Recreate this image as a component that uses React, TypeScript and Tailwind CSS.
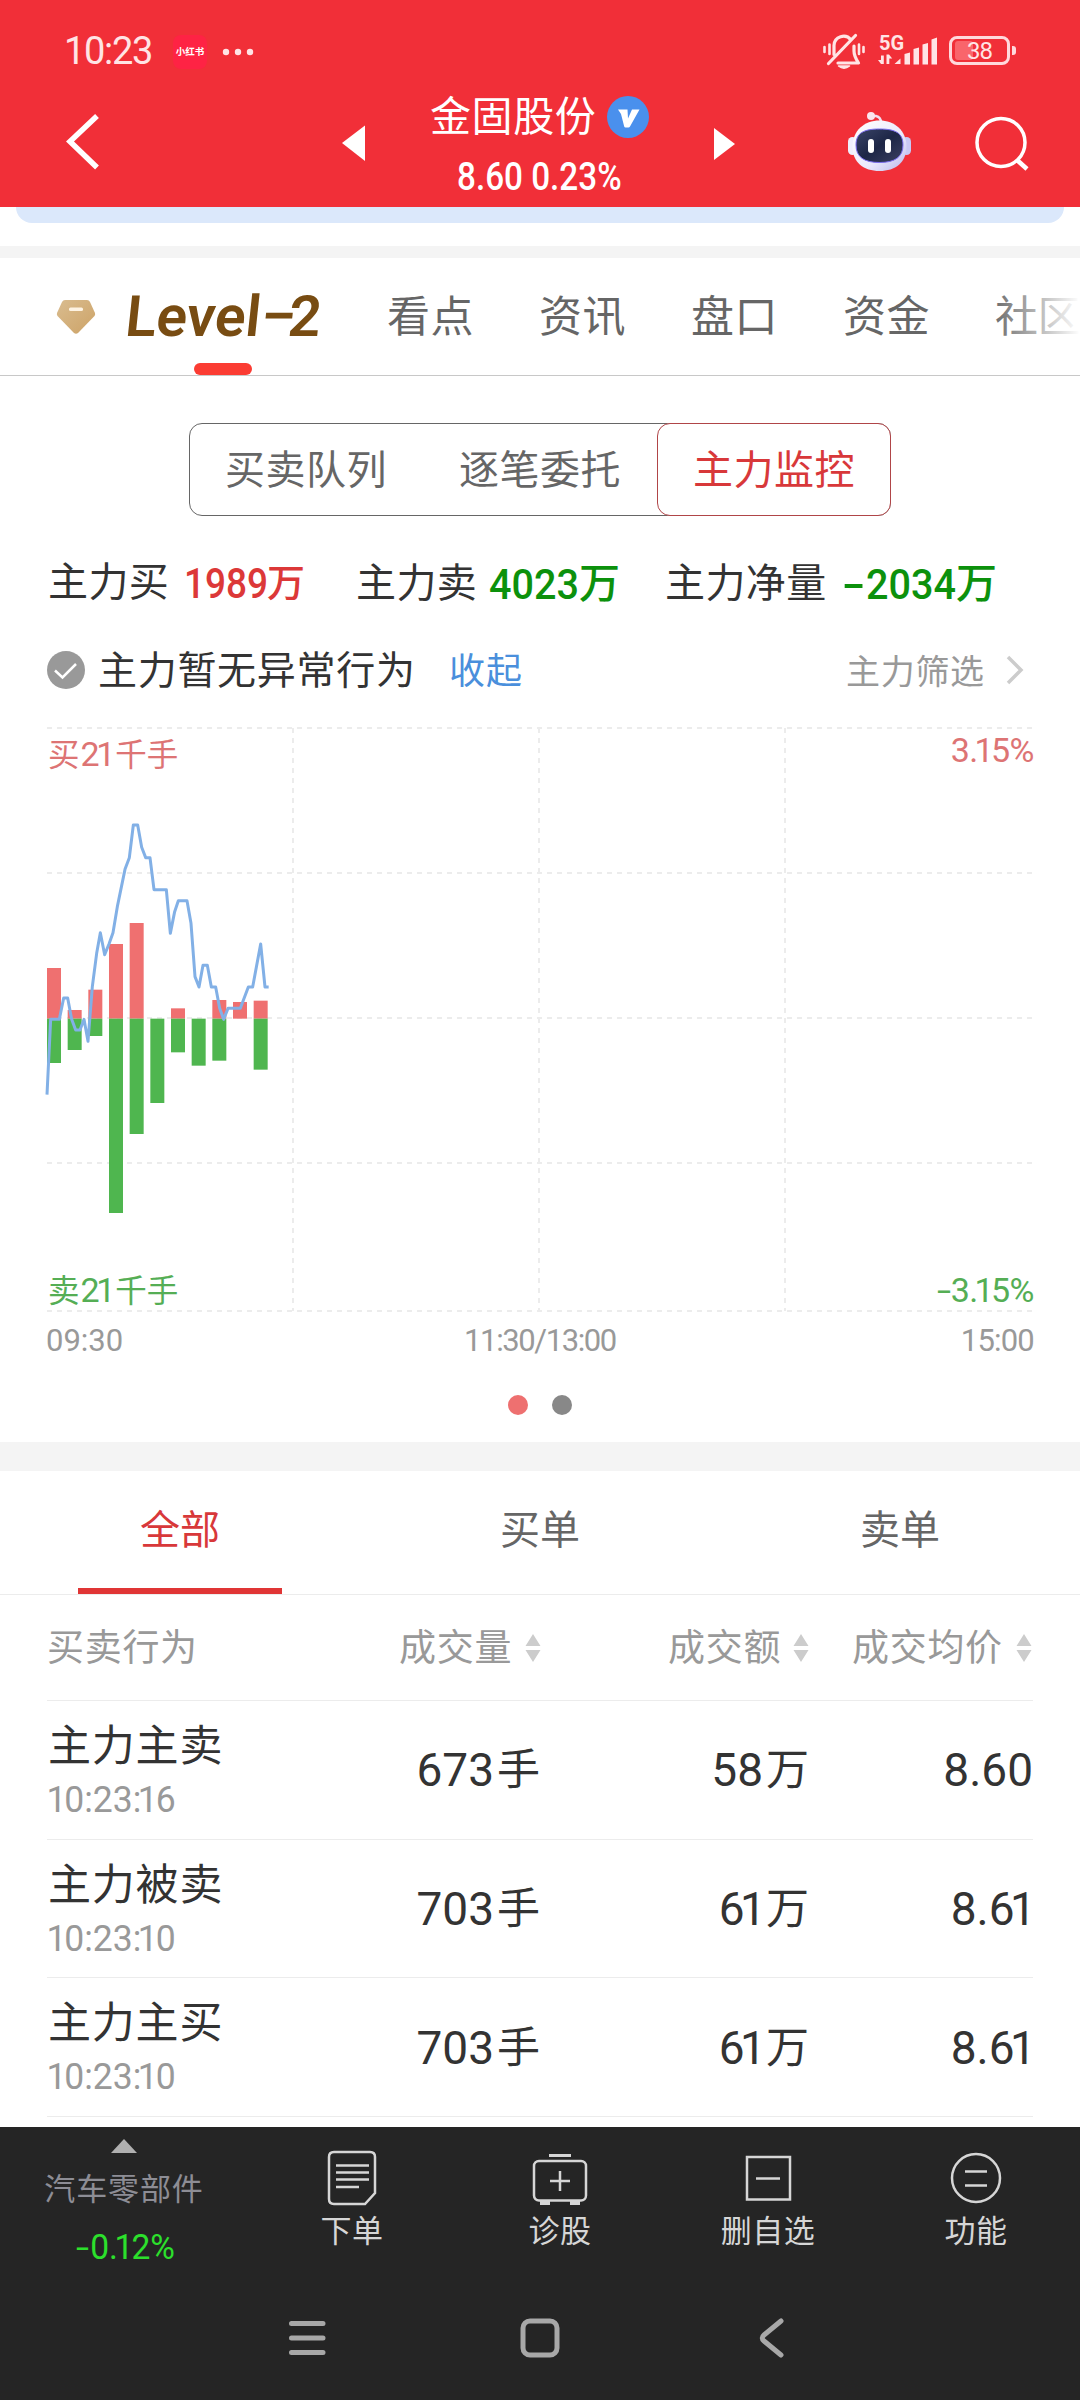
import React from "react";

type Row = { name: string; time: string; vol: string; amt: string; price: string };

const rows: Row[] = [
  { name: "主力主卖", time: "10:23:16", vol: "673", amt: "58", price: "8.60" },
  { name: "主力被卖", time: "10:23:10", vol: "703", amt: "61", price: "8.61" },
  { name: "主力主买", time: "10:23:10", vol: "703", amt: "61", price: "8.61" },
];

// Chart geometry in a 3x grid, zero axis at y = 716.
const buys = [[51, 564], [113, 690], [175, 629], [237, 492], [299, 429], [423, 685], [547, 660], [609, 666], [671, 662]];
const sells = [[51, 849], [113, 810], [175, 768], [237, 1299], [299, 1062], [361, 969], [423, 817], [485, 857], [547, 842], [671, 869]];
const line =
  "51,944 62,718 88,718 101,654 113,654 125,718 137,750 150,750 162,718 174,784 187,620 200,520 211,458 224,524 237,492 249,458 262,380 285,268 298,233 310,135 323,135 335,202 347,233 360,233 372,329 409,329 421,460 434,395 445,362 471,362 483,430 495,590 507,621 519,556 532,556 544,621 557,621 569,685 581,718 594,685 631,685 655,621 668,621 692,492 705,621 716,621";

// Sets each "1" tighter than the font's tabular figures do.
function Figures({ text }: { text: string }) {
  return (
    <>
      {text.split("").map((c, i) => (c === "1" ? <span key={i} className="mr-[-0.06em] ml-[-0.1em]">1</span> : c))}
    </>
  );
}

function StatusBar() {
  return (
    <div className="flex h-[101px] items-center text-[#ffe4e5]">
      <span className="ml-[64px] w-[109px] text-[38px] leading-[38px] tracking-[-1.3px]">10:23</span>
      <span className="mt-[2px] flex h-[34px] w-[34px] items-center justify-center rounded-[8px] bg-[#fe2344] text-[9.5px] leading-none font-bold whitespace-nowrap text-white">
        小红书
      </span>
      <svg className="mt-[2px] ml-[14px]" width="34" height="10" viewBox="0 0 34 10" fill="currentColor">
        <circle cx="5" cy="5" r="3.2" />
        <circle cx="17" cy="5" r="3.2" />
        <circle cx="29" cy="5" r="3.2" />
      </svg>
      <svg className="ml-auto" width="44" height="40" viewBox="822 31 44 40" fill="none" stroke="currentColor" strokeWidth="3.200" strokeLinecap="round" strokeLinejoin="round">
        <path d="M834 54.500V45.500a9.500 9.500 0 0 1 17-5.500M855.500 35.500L828.500 63.500M854 46v5c0 5 2 8 4.500 12H838" />
        <path d="M838.500 66q5.500 4.500 11 0z" fill="currentColor" strokeWidth="1.500" />
        <path d="M824.500 47v5M829.500 44.500v9.500M859 44.500v9.500M863.500 47v5" strokeWidth="2.600" />
      </svg>
      <div className="relative ml-[12px] h-[34px] w-[62px]">
        <span className="absolute top-[-1px] left-[1px] text-[20px] leading-[20px] font-bold">5G</span>
        <svg className="absolute top-0 left-0" width="62" height="34" viewBox="878 34 62 34" fill="currentColor">
          <path d="M894.500 64l6-5.500V64zM904.500 54l5.500-1.500V64.500h-5.500zM913.500 49l5.500-1.500V64.500h-5.500zM922.500 44.500l5.500-1.500V64.500h-5.500zM931.500 39.500l5.500-2V64.500h-5.500z" />
          <path d="M881 55.500h2.800V64h-2.800l-3-4h3zM886.500 64v-9.500h2.500l3.200 4h-2.900V64z" />
        </svg>
      </div>
      <div className="relative mr-[70px] ml-[9px] flex h-[29px] w-[61px] items-center justify-center rounded-[8px] border-3 border-[#ffd9dc]">
        <span className="absolute top-[2px] left-[3px] h-[19px] w-[18px] rounded-[3px] bg-[#f9656b]" />
        <span className="relative text-[24px] leading-[24px] tracking-[-1px]">38</span>
        <span className="absolute top-[7px] right-[-9px] h-[9px] w-[4px] rounded-r-[3px] bg-[#ffd9dc]" />
      </div>
    </div>
  );
}

function Robot() {
  return (
    <svg width="64" height="62" viewBox="848 111 64 62">
      <defs>
        <linearGradient id="shell" x1="0" y1="0" x2="1" y2="1">
          <stop offset="0" stopColor="#ffffff" />
          <stop offset="0.600" stopColor="#ebe9fb" />
          <stop offset="1" stopColor="#b9b8ee" />
        </linearGradient>
        <linearGradient id="face" x1="0" y1="0" x2="1" y2="1">
          <stop offset="0" stopColor="#3a4468" />
          <stop offset="0.500" stopColor="#1d2646" />
          <stop offset="1" stopColor="#3b4062" />
        </linearGradient>
      </defs>
      <path d="M871 116h5q5 1 5 7" fill="none" stroke="#f2dff0" strokeWidth="2.500" />
      <circle cx="871" cy="116" r="4" fill="#fbe6ee" />
      <rect x="848" y="137" width="9" height="18" rx="4.500" fill="#efeefc" />
      <rect x="902" y="137" width="9" height="18" rx="4.500" fill="#c9c8f4" />
      <path d="M879.500 120.500c15 0 27 10 27 26s-11 24.500-27 24.500-27-8.500-27-24.500 12-26 27-26z" fill="url(#shell)" />
      <path d="M879.500 129c16 0 23.500 4 23.500 16s-8 17.500-23.500 17.500S856 157 856 145s7.500-16 23.500-16z" fill="url(#face)" stroke="#7a6cf0" strokeWidth="1" />
      <rect x="868" y="139" width="6" height="14" rx="3" fill="#fff" />
      <rect x="885" y="139" width="6" height="14" rx="3" fill="#fff" />
    </svg>
  );
}

function Header() {
  return (
    <header className="h-[207px] bg-[#f12f38] text-white">
      <StatusBar />
      <div className="flex h-[106px]">
        <svg className="mt-[11px] ml-[62px]" width="40" height="60" viewBox="62 112 40 60" fill="none" stroke="white" strokeWidth="5.500">
          <path d="M97 116L70 141.500L97 167.500" />
        </svg>
        <svg className="mt-[24px] ml-[240px]" width="24" height="37" viewBox="0 0 24 37" fill="white">
          <path d="M0 18L23 0.500V36z" />
        </svg>
        <div className="ml-[64px] w-[222px]">
          <div className="mt-[-6px] flex h-[44px] items-center">
            <span className="w-[177px] text-[41px] leading-[44px] tracking-[0.6px] whitespace-nowrap">金固股份</span>
            <svg width="42" height="42" viewBox="0 0 42 42">
              <circle cx="21" cy="21" r="21" fill="#4a90ed" />
              <path d="M11 13.500h9.500l0.500 9 4-9h7.500L23 30.500q-0.500 1-1.500 1h-3q-1 0-1.300-1L14 18z" fill="#fff" />
            </svg>
          </div>
          <div className="mt-[19px] ml-[27px] origin-left scale-x-[.875] text-[38px] leading-[38px] font-medium whitespace-nowrap">8.60 0.23%</div>
        </div>
        <svg className="mt-[26px] ml-[62px]" width="22" height="34" viewBox="0 0 22 34" fill="white">
          <path d="M0 1v32L21 17z" />
        </svg>
        <div className="mt-[10px] ml-[112px]"><Robot /></div>
        <svg className="mt-[12px] ml-[60px]" width="62" height="62" viewBox="972 113 62 62" fill="none" stroke="white" strokeWidth="3.500">
          <circle cx="1001" cy="142.500" r="24" />
          <path d="M1017 160l10 9" strokeWidth="4.500" />
        </svg>
      </div>
    </header>
  );
}

function MainTabs() {
  return (
    <nav className="relative flex h-[118px] items-center border-b border-[#c8c8c8] text-[43px] leading-[44px] text-[#666]">
      <svg className="ml-[56px]" width="40" height="36" viewBox="0 0 40 36">
        <defs>
          <linearGradient id="gem" x1="0" y1="0" x2="1" y2="1">
            <stop offset="0" stopColor="#d9bc8f" />
            <stop offset="1" stopColor="#cda367" />
          </linearGradient>
        </defs>
        <path d="M9 1h22q2 0 3 2l5 11q0.500 1.500-0.500 3L22 34q-2 1.500-4 0L1.500 17q-1-1.500-0.500-3L6 3q1-2 3-2z" fill="url(#gem)" />
        <rect x="13" y="8.500" width="14" height="3.500" rx="1.500" fill="#fdf3e3" />
      </svg>
      <div className="ml-[30px] flex w-[261px] -skew-x-6 text-[57px] leading-[60px] font-semibold text-[#784c12]">
        <span>Level</span>
        <span className="mt-[-3px] w-[27px] origin-left scale-x-[1.75]">-</span>
        <span className="ml-[1px]">2</span>
      </div>
      <div className="flex gap-[66px] tracking-[0.5px] whitespace-nowrap">
        <span className="w-[86px]">看点</span>
        <span className="w-[86px]">资讯</span>
        <span className="w-[86px]">盘口</span>
        <span className="w-[86px]">资金</span>
        <span className="w-[85px] tracking-[-0.5px]">社区</span>
      </div>
      <span className="absolute bottom-0 left-[194px] h-[12px] w-[58px] rounded-full bg-[#fb3c33]" />
      <span className="absolute top-0 right-0 h-[110px] w-[90px] bg-linear-to-r from-white/0 to-white" />
    </nav>
  );
}

function Stat({ className, label, labelClass, value, valueClass, unitClass }: { className: string; label: string; labelClass: string; value: string; valueClass: string; unitClass: string }) {
  const neg = value.startsWith("-");
  return (
    <div className={`flex items-center ${className}`}>
      <span className={`text-[40px] tracking-[0.4px] text-[#333] ${labelClass}`}>{label}</span>
      {neg && <span className="w-[24px] origin-left scale-x-[1.6] text-[43px] font-medium">-</span>}
      <span className={`origin-left text-[43px] font-medium ${valueClass}`}>{value.replace("-", "")}</span>
      <span className={`font-medium ${unitClass}`}>万</span>
    </div>
  );
}

function Chart() {
  const grid = { stroke: "#ececec", strokeWidth: 2, strokeDasharray: "5 5" };
  return (
    <div className="relative h-[586px]">
      <svg width="1080" height="586" viewBox="0 727 1080 586">
        {[728, 873, 1018, 1163, 1311].map((y) => <path key={y} d={`M47 ${y}H1033`} {...grid} />)}
        {[293, 539, 785].map((x) => <path key={x} d={`M${x} 728V1311`} {...grid} />)}
        <g transform="translate(30 780) scale(0.33333)">
          {buys.map(([x, y]) => <rect key={x} x={x} y={y} width="42" height={716 - y} fill="#ef7070" />)}
          {sells.map(([x, y]) => <rect key={x} x={x} y={716} width="42" height={y - 716} fill="#4fb64f" />)}
          <polyline points={line} fill="none" stroke="#82b0e6" strokeWidth="9" strokeLinejoin="round" />
        </g>
      </svg>
      <div className="absolute top-[7px] right-[46px] left-[48px] flex justify-between text-[31.5px] leading-[32px] text-[#dd7474]">
        <span className="mt-[4px]">买<span className="mr-[2px] ml-[1px] text-[34px]"><Figures text="21" /></span>千手</span>
        <span className="text-[34px] tracking-[-0.500px]"><Figures text="3.15%" /></span>
      </div>
      <div className="absolute top-[547px] right-[46px] left-[48px] flex justify-between text-[31.5px] leading-[32px] text-[#55ae55]">
        <span>卖<span className="mr-[2px] ml-[1px] text-[34px]"><Figures text="21" /></span>千手</span>
        <span className="text-[34px] tracking-[-0.500px]"><span className="mr-[5px] inline-block origin-left scale-x-[1.5]">-</span><Figures text="3.15%" /></span>
      </div>
    </div>
  );
}

function Sort({ className }: { className: string }) {
  return (
    <svg className={className} width="16" height="28" viewBox="0 0 16 28" fill="#ccc">
      <path d="M8 0l7.500 12H0.500zM8 28l7.500-12H0.500z" />
    </svg>
  );
}

function Table() {
  return (
    <section className="mx-[47px]">
      <div className="flex h-[106px] items-center border-b border-[#ececec] text-[37px] leading-[40px] tracking-[0.7px] whitespace-nowrap text-[#999]">
        <span className="w-[352px] pt-[2px]">买卖行为</span>
        <span className="w-[126px] pt-[2px]">成交量</span>
        <Sort className="mr-[127px]" />
        <span className="w-[125px] pt-[2px]">成交额</span>
        <Sort className="mr-[43px]" />
        <span className="w-[164px] pt-[2px]">成交均价</span>
        <Sort className="" />
      </div>
      {rows.map((r) => (
        <div key={r.name} className="flex h-[138.700px] items-center border-b border-[#ececec] text-[#333]">
          <div className="w-[290px] pt-[4px]">
            <div className="pl-[1px] text-[43px] leading-[50px] tracking-[0.8px]">{r.name}</div>
            <div className="mt-[6px] ml-[3px] origin-left scale-x-[.96] text-[37px] leading-[46px] text-[#999]"><Figures text={r.time} /></div>
          </div>
          <Value className="w-[203px]" num={r.vol} unit="手" />
          <Value className="w-[269px]" num={r.amt} unit="万" />
          <Value className="w-[224px]" num={r.price} unit="" />
        </div>
      ))}
    </section>
  );
}

function Value({ className, num, unit }: { className: string; num: string; unit: string }) {
  return (
    <div className={`flex items-center justify-end gap-[3px] pt-px text-[43px] leading-[50px] ${className}`}>
      <span className="text-[46px]"><Figures text={num} /></span>
      {unit && <span>{unit}</span>}
    </div>
  );
}

function BarItem({ label, children }: { label: string; children: React.ReactNode }) {
  return (
    <div className="flex w-[208px] flex-col items-center">
      <svg className="mt-[22px]" width="60" height="60" viewBox="0 0 60 60" fill="none" stroke="#d6d6d6" strokeWidth="2.500">
        {children}
      </svg>
      <span className="mt-[5px] text-[31px] leading-[36px] tracking-[0.5px] text-[#d6d6d6]">{label}</span>
    </div>
  );
}

function BottomBar() {
  return (
    <footer className="h-[273px] bg-[#252525]">
      <div className="flex h-[150px]">
        <div className="flex w-[248px] flex-col items-center">
          <svg className="mt-[12px]" width="26" height="14" viewBox="0 0 26 14" fill="#b0b0b0"><path d="M13 0l13 14H0z" /></svg>
          <span className="mt-[19px] text-[31px] leading-[36px] tracking-[0.9px] text-[#8d8d95]">汽车零部件</span>
          <span className="mt-[22px] ml-[3px] origin-center scale-x-[.96] text-[35px] leading-[36px] text-[#2ce02c]">
            <span className="mr-[5px] inline-block origin-left scale-x-[1.4]">-</span><Figures text="0.12%" />
          </span>
        </div>
        <BarItem label="下单">
          <path d="M12 3h36q5 0 5 5v36l-10 11H12q-5 0-5-5V8q0-5 5-5z" />
          <path d="M14 16.500h33M14 23.500h33M14 30.500h33M14 38h23" />
        </BarItem>
        <BarItem label="诊股">
          <path d="M19 6.500h22" strokeWidth="3" />
          <rect x="4" y="12" width="52" height="39.500" rx="5" />
          <path d="M20 32h20M30 22v20" />
          <path d="M10 54h10M40 54h10" strokeWidth="4" />
        </BarItem>
        <BarItem label="删自选">
          <rect x="9" y="8" width="43" height="42.500" />
          <path d="M18 29.500h24" />
        </BarItem>
        <BarItem label="功能">
          <circle cx="30" cy="29" r="24" />
          <path d="M19 22.500h22M19 36.500h22" />
        </BarItem>
      </div>
      <div className="flex h-[123px]">
        <svg width="1080" height="123" viewBox="0 2277 1080 123" fill="none" stroke="#a8a8a8" strokeWidth="5" strokeLinecap="round" strokeLinejoin="round">
          <path d="M291.500 2323.500h31.500M291.500 2338h31.500M291.500 2352.500h31.500" />
          <rect x="523" y="2321" width="34" height="34" rx="7" />
          <path d="M781 2321L764 2335Q760.500 2338 764 2341L781 2355" />
        </svg>
      </div>
    </footer>
  );
}

export default function App() {
  return (
    <div className="h-[2400px] w-[1080px] overflow-hidden bg-white font-[Roboto,'Noto_Sans_CJK_SC',sans-serif]">
      <Header />
      <div className="mx-[16px] h-[16px] rounded-b-[16px] bg-[#dbe8fb]" />
      <div className="mt-[23px] h-[12px] bg-[#f4f4f4]" />
      <MainTabs />

      <div className="mt-[47px] ml-[189px] flex h-[93px] w-[702px] rounded-[13px] border border-[#666] text-[40px] leading-[40px] tracking-[0.5px] text-[#666]">
        <div className="flex flex-1 items-center justify-center pt-[2px] pr-[2px]">买卖队列</div>
        <div className="flex flex-1 items-center justify-center pt-[2px] pr-[2px]">逐笔委托</div>
        <div className="-m-px flex w-[234px] items-center justify-center rounded-[13px] border border-[#b04548] bg-white pt-[2px] text-[#d8383a]">主力监控</div>
      </div>

      <div className="mt-[28px] flex h-[80px] pl-[48px] leading-[44px] whitespace-nowrap">
        <Stat className="w-[308px] pb-[3px] text-[#dc3838]" label="主力买" labelClass="w-[136px]" value="1989" valueClass="w-[83px] scale-x-[.86]" unitClass="text-[38px]" />
        <Stat className="w-[309px] text-[#0c910c]" label="主力卖" labelClass="w-[133px]" value="4023" valueClass="w-[90px] scale-x-[.92]" unitClass="text-[41px]" />
        <Stat className="text-[#0c910c]" label="主力净量" labelClass="w-[177px]" value="-2034" valueClass="w-[90px] scale-x-[.92]" unitClass="text-[41px]" />
      </div>

      <div className="flex h-[92px] items-center pl-[47px] leading-[44px] whitespace-nowrap">
        <svg width="38" height="38" viewBox="0 0 38 38">
          <circle cx="19" cy="19" r="19" fill="#999" />
          <path d="M8 19.500l7.500 7L29 13" fill="none" stroke="#fff" strokeWidth="2.500" />
        </svg>
        <span className="ml-[13px] w-[351px] pt-[2px] text-[39px] tracking-[0.7px] text-[#333]">主力暂无异常行为</span>
        <span className="w-[397px] pt-[3px] text-[36px] tracking-[1px] text-[#4a8fdc]">收起</span>
        <span className="w-[160px] pt-[3px] text-[34px] tracking-[0.7px] text-[#999]">主力筛选</span>
        <svg width="18" height="30" viewBox="0 0 18 30" fill="none" stroke="#ccc" strokeWidth="3.500"><path d="M2 2l13 13L2 28" /></svg>
      </div>

      <div className="mt-[11px]"><Chart /></div>
      <div className="mx-[46px] mt-[11px] grid h-[34px] grid-cols-3 text-[31px] leading-[34px] text-[#999]">
        <span>09:30</span>
        <span className="text-center tracking-[-1.4px]">11:30/13:00</span>
        <span className="text-right tracking-[-0.800px]">15:00</span>
      </div>
      <div className="mt-[37px] flex justify-center gap-[24px]">
        <span className="h-[20px] w-[20px] rounded-full bg-[#ee7070]" />
        <span className="h-[20px] w-[20px] rounded-full bg-[#888]" />
      </div>
      <div className="mt-[27px] h-[29px] bg-[#f4f4f4]" />

      <div className="relative grid h-[124px] grid-cols-3 border-b border-[#ececec] text-center text-[40px] leading-[120px] text-[#666]">
        <span className="text-[#d8383a]">全部</span>
        <span>买单</span>
        <span>卖单</span>
        <i className="absolute bottom-0 left-[78px] h-[6px] w-[204px] bg-[#e03535]" />
      </div>
      <Table />
      <div className="h-[10px]" />
      <BottomBar />
    </div>
  );
}
